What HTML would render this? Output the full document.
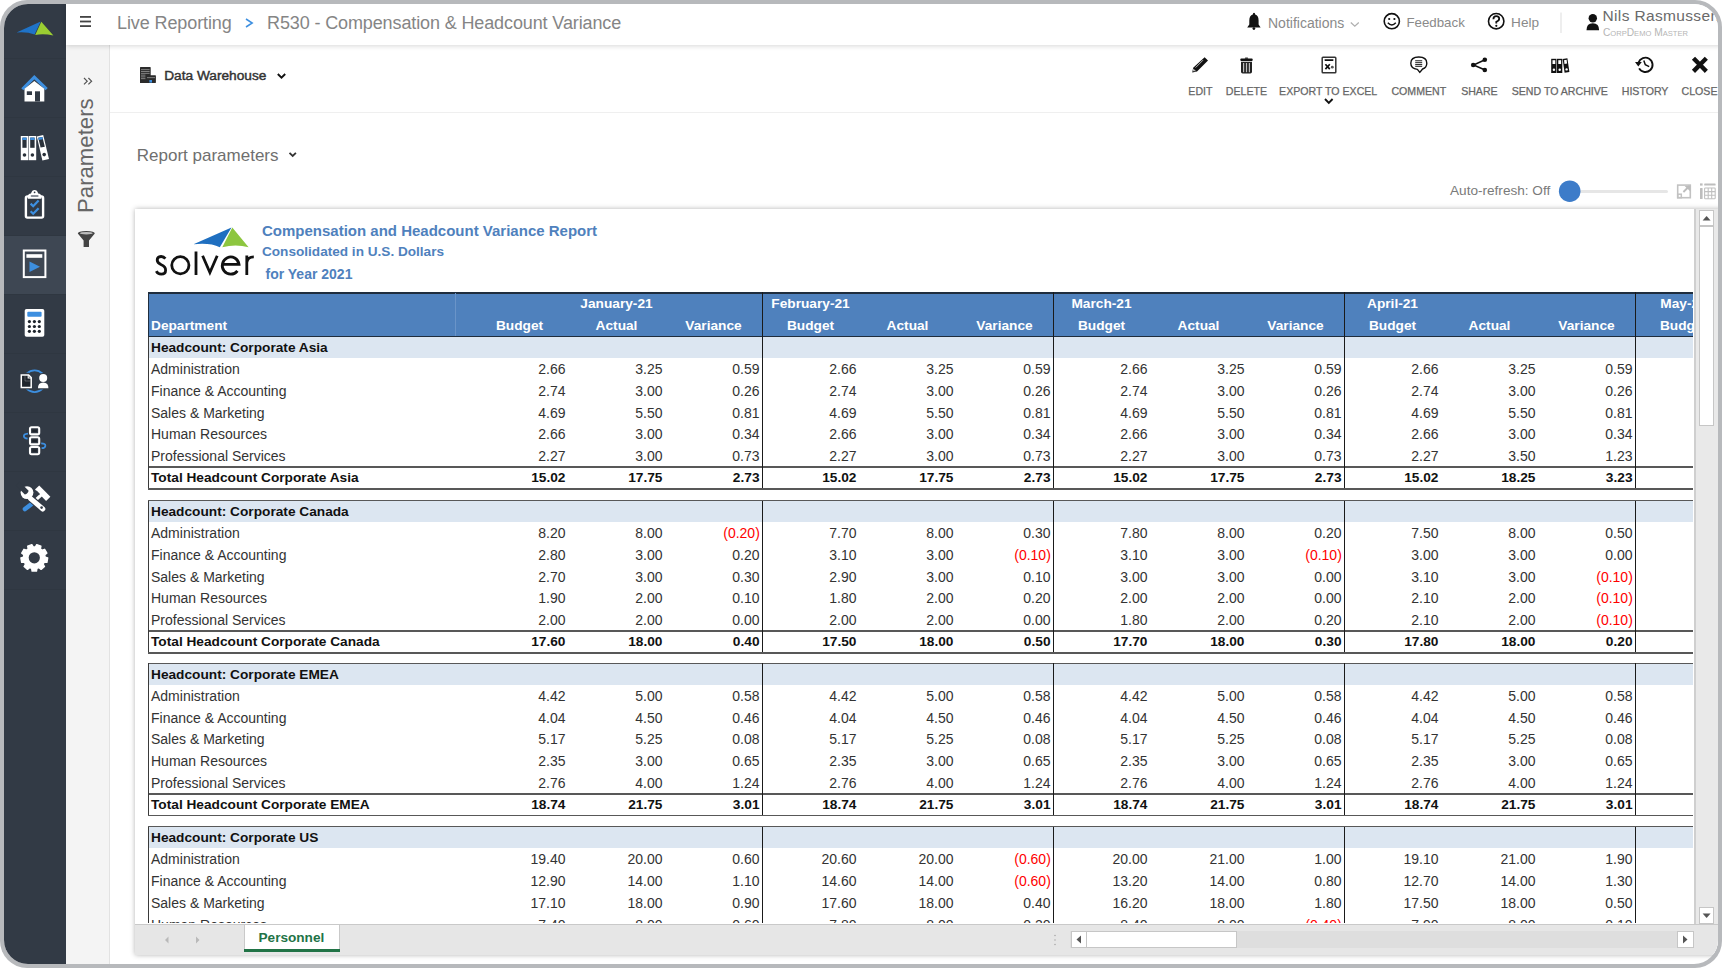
<!DOCTYPE html>
<html><head><meta charset="utf-8">
<style>
html,body{margin:0;padding:0;background:#fff;width:1722px;height:968px;overflow:hidden;font-family:"Liberation Sans", sans-serif;}
.t{position:absolute;white-space:nowrap;line-height:1;}
.b{position:absolute;}
svg{position:absolute;overflow:visible;}
#frame{position:absolute;left:0;top:0;width:1722px;height:968px;background:#b7b9bc;border-radius:27px;}
#app{position:absolute;left:0;top:0;width:1722px;height:968px;background:#fff;clip-path:inset(4px 4px 4px 4px round 24px);overflow:hidden;}
</style></head><body>
<div id="frame"></div>
<div id="app">

<div class="b" style="left:66px;top:44px;width:44px;height:924px;background:#f4f4f4;border-right:1px solid #e2e2e2;box-sizing:border-box;"></div>
<div class="b" style="left:110px;top:112px;width:1612px;height:1px;background:#efefef;"></div>
<div class="b" style="left:0px;top:0px;width:66px;height:968px;background:#323a45;"></div>
<div class="b" style="left:4px;top:236px;width:62px;height:58px;background:#3e4753;"></div>
<div class="b" style="left:4px;top:58px;width:62px;height:1px;background:#2f3741;"></div>
<div class="b" style="left:4px;top:117px;width:62px;height:1px;background:#2f3741;"></div>
<div class="b" style="left:4px;top:176px;width:62px;height:1px;background:#2f3741;"></div>
<div class="b" style="left:4px;top:235px;width:62px;height:1px;background:#2f3741;"></div>
<div class="b" style="left:4px;top:294px;width:62px;height:1px;background:#2f3741;"></div>
<div class="b" style="left:4px;top:353px;width:62px;height:1px;background:#2f3741;"></div>
<div class="b" style="left:4px;top:412px;width:62px;height:1px;background:#2f3741;"></div>
<div class="b" style="left:4px;top:471px;width:62px;height:1px;background:#2f3741;"></div>
<div class="b" style="left:4px;top:530px;width:62px;height:1px;background:#2f3741;"></div>
<div class="b" style="left:4px;top:589px;width:62px;height:1px;background:#2f3741;"></div>
<div class="b" style="left:66px;top:0px;width:1656px;height:44.5px;background:#fff;box-shadow:0 1px 5px rgba(0,0,0,0.16);"></div>
<div class="b" style="left:135px;top:209px;width:1600px;height:746px;background:#fff;box-shadow:0 0 5px rgba(0,0,0,0.3);"></div>
<div class="b" style="left:148px;top:292px;width:1545px;height:631px;overflow:hidden;">
<div class="b" style="left:0.00px;top:0.00px;width:1600.00px;height:45.00px;background:#4f81bd;"></div>
<div class="b" style="left:0.00px;top:0.00px;width:1600.00px;height:1.50px;background:#1f2d3d;"></div>
<div class="b" style="left:0.00px;top:44.00px;width:1600.00px;height:1.20px;background:#1f2d3d;"></div>
<div class="b" style="left:306.50px;top:1.00px;width:1.00px;height:43.00px;background:#6a94c8;"></div>
<div class="t" style="left:368.50px;width:200px;text-align:center;top:4.70px;font-size:13.7px;color:#fff;font-weight:bold;">January-21</div>
<div class="t" style="left:562.50px;width:200px;text-align:center;top:4.70px;font-size:13.7px;color:#fff;font-weight:bold;">February-21</div>
<div class="t" style="left:853.50px;width:200px;text-align:center;top:4.70px;font-size:13.7px;color:#fff;font-weight:bold;">March-21</div>
<div class="t" style="left:1144.50px;width:200px;text-align:center;top:4.70px;font-size:13.7px;color:#fff;font-weight:bold;">April-21</div>
<div class="t" style="left:1435.50px;width:200px;text-align:center;top:4.70px;font-size:13.7px;color:#fff;font-weight:bold;">May-21</div>
<div class="t" style="left:3.00px;top:27.10px;font-size:13.7px;color:#fff;font-weight:bold;">Department</div>
<div class="t" style="left:271.50px;width:200px;text-align:center;top:27.10px;font-size:13.7px;color:#fff;font-weight:bold;">Budget</div>
<div class="t" style="left:368.50px;width:200px;text-align:center;top:27.10px;font-size:13.7px;color:#fff;font-weight:bold;">Actual</div>
<div class="t" style="left:465.50px;width:200px;text-align:center;top:27.10px;font-size:13.7px;color:#fff;font-weight:bold;">Variance</div>
<div class="t" style="left:562.50px;width:200px;text-align:center;top:27.10px;font-size:13.7px;color:#fff;font-weight:bold;">Budget</div>
<div class="t" style="left:659.50px;width:200px;text-align:center;top:27.10px;font-size:13.7px;color:#fff;font-weight:bold;">Actual</div>
<div class="t" style="left:756.50px;width:200px;text-align:center;top:27.10px;font-size:13.7px;color:#fff;font-weight:bold;">Variance</div>
<div class="t" style="left:853.50px;width:200px;text-align:center;top:27.10px;font-size:13.7px;color:#fff;font-weight:bold;">Budget</div>
<div class="t" style="left:950.50px;width:200px;text-align:center;top:27.10px;font-size:13.7px;color:#fff;font-weight:bold;">Actual</div>
<div class="t" style="left:1047.50px;width:200px;text-align:center;top:27.10px;font-size:13.7px;color:#fff;font-weight:bold;">Variance</div>
<div class="t" style="left:1144.50px;width:200px;text-align:center;top:27.10px;font-size:13.7px;color:#fff;font-weight:bold;">Budget</div>
<div class="t" style="left:1241.50px;width:200px;text-align:center;top:27.10px;font-size:13.7px;color:#fff;font-weight:bold;">Actual</div>
<div class="t" style="left:1338.50px;width:200px;text-align:center;top:27.10px;font-size:13.7px;color:#fff;font-weight:bold;">Variance</div>
<div class="t" style="left:1435.50px;width:200px;text-align:center;top:27.10px;font-size:13.7px;color:#fff;font-weight:bold;">Budget</div>
<div class="t" style="left:1532.50px;width:200px;text-align:center;top:27.10px;font-size:13.7px;color:#fff;font-weight:bold;">Actual</div>
<div class="t" style="left:1629.50px;width:200px;text-align:center;top:27.10px;font-size:13.7px;color:#fff;font-weight:bold;">Variance</div>
<div class="b" style="left:0.00px;top:45.20px;width:1600.00px;height:21.10px;background:#dce6f1;"></div>
<div class="t" style="left:3.00px;top:48.70px;font-size:13.7px;color:#111;font-weight:bold;">Headcount: Corporate Asia</div>
<div class="t" style="left:3.00px;top:70.25px;font-size:14px;color:#333;">Administration</div>
<div class="t" style="left:297.50px;width:120px;text-align:right;top:70.25px;font-size:14px;color:#333;">2.66</div>
<div class="t" style="left:394.50px;width:120px;text-align:right;top:70.25px;font-size:14px;color:#333;">3.25</div>
<div class="t" style="left:491.50px;width:120px;text-align:right;top:70.25px;font-size:14px;color:#333;">0.59</div>
<div class="t" style="left:588.50px;width:120px;text-align:right;top:70.25px;font-size:14px;color:#333;">2.66</div>
<div class="t" style="left:685.50px;width:120px;text-align:right;top:70.25px;font-size:14px;color:#333;">3.25</div>
<div class="t" style="left:782.50px;width:120px;text-align:right;top:70.25px;font-size:14px;color:#333;">0.59</div>
<div class="t" style="left:879.50px;width:120px;text-align:right;top:70.25px;font-size:14px;color:#333;">2.66</div>
<div class="t" style="left:976.50px;width:120px;text-align:right;top:70.25px;font-size:14px;color:#333;">3.25</div>
<div class="t" style="left:1073.50px;width:120px;text-align:right;top:70.25px;font-size:14px;color:#333;">0.59</div>
<div class="t" style="left:1170.50px;width:120px;text-align:right;top:70.25px;font-size:14px;color:#333;">2.66</div>
<div class="t" style="left:1267.50px;width:120px;text-align:right;top:70.25px;font-size:14px;color:#333;">3.25</div>
<div class="t" style="left:1364.50px;width:120px;text-align:right;top:70.25px;font-size:14px;color:#333;">0.59</div>
<div class="t" style="left:3.00px;top:91.95px;font-size:14px;color:#333;">Finance &amp; Accounting</div>
<div class="t" style="left:297.50px;width:120px;text-align:right;top:91.95px;font-size:14px;color:#333;">2.74</div>
<div class="t" style="left:394.50px;width:120px;text-align:right;top:91.95px;font-size:14px;color:#333;">3.00</div>
<div class="t" style="left:491.50px;width:120px;text-align:right;top:91.95px;font-size:14px;color:#333;">0.26</div>
<div class="t" style="left:588.50px;width:120px;text-align:right;top:91.95px;font-size:14px;color:#333;">2.74</div>
<div class="t" style="left:685.50px;width:120px;text-align:right;top:91.95px;font-size:14px;color:#333;">3.00</div>
<div class="t" style="left:782.50px;width:120px;text-align:right;top:91.95px;font-size:14px;color:#333;">0.26</div>
<div class="t" style="left:879.50px;width:120px;text-align:right;top:91.95px;font-size:14px;color:#333;">2.74</div>
<div class="t" style="left:976.50px;width:120px;text-align:right;top:91.95px;font-size:14px;color:#333;">3.00</div>
<div class="t" style="left:1073.50px;width:120px;text-align:right;top:91.95px;font-size:14px;color:#333;">0.26</div>
<div class="t" style="left:1170.50px;width:120px;text-align:right;top:91.95px;font-size:14px;color:#333;">2.74</div>
<div class="t" style="left:1267.50px;width:120px;text-align:right;top:91.95px;font-size:14px;color:#333;">3.00</div>
<div class="t" style="left:1364.50px;width:120px;text-align:right;top:91.95px;font-size:14px;color:#333;">0.26</div>
<div class="t" style="left:3.00px;top:113.65px;font-size:14px;color:#333;">Sales &amp; Marketing</div>
<div class="t" style="left:297.50px;width:120px;text-align:right;top:113.65px;font-size:14px;color:#333;">4.69</div>
<div class="t" style="left:394.50px;width:120px;text-align:right;top:113.65px;font-size:14px;color:#333;">5.50</div>
<div class="t" style="left:491.50px;width:120px;text-align:right;top:113.65px;font-size:14px;color:#333;">0.81</div>
<div class="t" style="left:588.50px;width:120px;text-align:right;top:113.65px;font-size:14px;color:#333;">4.69</div>
<div class="t" style="left:685.50px;width:120px;text-align:right;top:113.65px;font-size:14px;color:#333;">5.50</div>
<div class="t" style="left:782.50px;width:120px;text-align:right;top:113.65px;font-size:14px;color:#333;">0.81</div>
<div class="t" style="left:879.50px;width:120px;text-align:right;top:113.65px;font-size:14px;color:#333;">4.69</div>
<div class="t" style="left:976.50px;width:120px;text-align:right;top:113.65px;font-size:14px;color:#333;">5.50</div>
<div class="t" style="left:1073.50px;width:120px;text-align:right;top:113.65px;font-size:14px;color:#333;">0.81</div>
<div class="t" style="left:1170.50px;width:120px;text-align:right;top:113.65px;font-size:14px;color:#333;">4.69</div>
<div class="t" style="left:1267.50px;width:120px;text-align:right;top:113.65px;font-size:14px;color:#333;">5.50</div>
<div class="t" style="left:1364.50px;width:120px;text-align:right;top:113.65px;font-size:14px;color:#333;">0.81</div>
<div class="t" style="left:3.00px;top:135.35px;font-size:14px;color:#333;">Human Resources</div>
<div class="t" style="left:297.50px;width:120px;text-align:right;top:135.35px;font-size:14px;color:#333;">2.66</div>
<div class="t" style="left:394.50px;width:120px;text-align:right;top:135.35px;font-size:14px;color:#333;">3.00</div>
<div class="t" style="left:491.50px;width:120px;text-align:right;top:135.35px;font-size:14px;color:#333;">0.34</div>
<div class="t" style="left:588.50px;width:120px;text-align:right;top:135.35px;font-size:14px;color:#333;">2.66</div>
<div class="t" style="left:685.50px;width:120px;text-align:right;top:135.35px;font-size:14px;color:#333;">3.00</div>
<div class="t" style="left:782.50px;width:120px;text-align:right;top:135.35px;font-size:14px;color:#333;">0.34</div>
<div class="t" style="left:879.50px;width:120px;text-align:right;top:135.35px;font-size:14px;color:#333;">2.66</div>
<div class="t" style="left:976.50px;width:120px;text-align:right;top:135.35px;font-size:14px;color:#333;">3.00</div>
<div class="t" style="left:1073.50px;width:120px;text-align:right;top:135.35px;font-size:14px;color:#333;">0.34</div>
<div class="t" style="left:1170.50px;width:120px;text-align:right;top:135.35px;font-size:14px;color:#333;">2.66</div>
<div class="t" style="left:1267.50px;width:120px;text-align:right;top:135.35px;font-size:14px;color:#333;">3.00</div>
<div class="t" style="left:1364.50px;width:120px;text-align:right;top:135.35px;font-size:14px;color:#333;">0.34</div>
<div class="t" style="left:3.00px;top:157.05px;font-size:14px;color:#333;">Professional Services</div>
<div class="t" style="left:297.50px;width:120px;text-align:right;top:157.05px;font-size:14px;color:#333;">2.27</div>
<div class="t" style="left:394.50px;width:120px;text-align:right;top:157.05px;font-size:14px;color:#333;">3.00</div>
<div class="t" style="left:491.50px;width:120px;text-align:right;top:157.05px;font-size:14px;color:#333;">0.73</div>
<div class="t" style="left:588.50px;width:120px;text-align:right;top:157.05px;font-size:14px;color:#333;">2.27</div>
<div class="t" style="left:685.50px;width:120px;text-align:right;top:157.05px;font-size:14px;color:#333;">3.00</div>
<div class="t" style="left:782.50px;width:120px;text-align:right;top:157.05px;font-size:14px;color:#333;">0.73</div>
<div class="t" style="left:879.50px;width:120px;text-align:right;top:157.05px;font-size:14px;color:#333;">2.27</div>
<div class="t" style="left:976.50px;width:120px;text-align:right;top:157.05px;font-size:14px;color:#333;">3.00</div>
<div class="t" style="left:1073.50px;width:120px;text-align:right;top:157.05px;font-size:14px;color:#333;">0.73</div>
<div class="t" style="left:1170.50px;width:120px;text-align:right;top:157.05px;font-size:14px;color:#333;">2.27</div>
<div class="t" style="left:1267.50px;width:120px;text-align:right;top:157.05px;font-size:14px;color:#333;">3.50</div>
<div class="t" style="left:1364.50px;width:120px;text-align:right;top:157.05px;font-size:14px;color:#333;">1.23</div>
<div class="b" style="left:0.00px;top:174.40px;width:1600.00px;height:1.60px;background:#585858;"></div>
<div class="b" style="left:0.00px;top:196.10px;width:1600.00px;height:1.60px;background:#585858;"></div>
<div class="t" style="left:3.00px;top:179.20px;font-size:13.7px;color:#111;font-weight:bold;">Total Headcount Corporate Asia</div>
<div class="t" style="left:297.50px;width:120px;text-align:right;top:179.20px;font-size:13.7px;color:#111;font-weight:bold;">15.02</div>
<div class="t" style="left:394.50px;width:120px;text-align:right;top:179.20px;font-size:13.7px;color:#111;font-weight:bold;">17.75</div>
<div class="t" style="left:491.50px;width:120px;text-align:right;top:179.20px;font-size:13.7px;color:#111;font-weight:bold;">2.73</div>
<div class="t" style="left:588.50px;width:120px;text-align:right;top:179.20px;font-size:13.7px;color:#111;font-weight:bold;">15.02</div>
<div class="t" style="left:685.50px;width:120px;text-align:right;top:179.20px;font-size:13.7px;color:#111;font-weight:bold;">17.75</div>
<div class="t" style="left:782.50px;width:120px;text-align:right;top:179.20px;font-size:13.7px;color:#111;font-weight:bold;">2.73</div>
<div class="t" style="left:879.50px;width:120px;text-align:right;top:179.20px;font-size:13.7px;color:#111;font-weight:bold;">15.02</div>
<div class="t" style="left:976.50px;width:120px;text-align:right;top:179.20px;font-size:13.7px;color:#111;font-weight:bold;">17.75</div>
<div class="t" style="left:1073.50px;width:120px;text-align:right;top:179.20px;font-size:13.7px;color:#111;font-weight:bold;">2.73</div>
<div class="t" style="left:1170.50px;width:120px;text-align:right;top:179.20px;font-size:13.7px;color:#111;font-weight:bold;">15.02</div>
<div class="t" style="left:1267.50px;width:120px;text-align:right;top:179.20px;font-size:13.7px;color:#111;font-weight:bold;">18.25</div>
<div class="t" style="left:1364.50px;width:120px;text-align:right;top:179.20px;font-size:13.7px;color:#111;font-weight:bold;">3.23</div>
<div class="b" style="left:-0.20px;top:44.60px;width:1.50px;height:151.90px;background:#3a3a3a;"></div>
<div class="b" style="left:613.50px;top:44.60px;width:1.10px;height:151.90px;background:#1a1a1a;"></div>
<div class="b" style="left:904.50px;top:44.60px;width:1.10px;height:151.90px;background:#1a1a1a;"></div>
<div class="b" style="left:1195.50px;top:44.60px;width:1.10px;height:151.90px;background:#1a1a1a;"></div>
<div class="b" style="left:1486.50px;top:44.60px;width:1.10px;height:151.90px;background:#1a1a1a;"></div>
<div class="b" style="left:0.00px;top:207.80px;width:1600.00px;height:1.60px;background:#585858;"></div>
<div class="b" style="left:0.00px;top:209.10px;width:1600.00px;height:21.10px;background:#dce6f1;"></div>
<div class="t" style="left:3.00px;top:212.60px;font-size:13.7px;color:#111;font-weight:bold;">Headcount: Corporate Canada</div>
<div class="t" style="left:3.00px;top:234.15px;font-size:14px;color:#333;">Administration</div>
<div class="t" style="left:297.50px;width:120px;text-align:right;top:234.15px;font-size:14px;color:#333;">8.20</div>
<div class="t" style="left:394.50px;width:120px;text-align:right;top:234.15px;font-size:14px;color:#333;">8.00</div>
<div class="t" style="left:491.80px;width:120px;text-align:right;top:234.15px;font-size:14px;color:#ff0000;">(0.20)</div>
<div class="t" style="left:588.50px;width:120px;text-align:right;top:234.15px;font-size:14px;color:#333;">7.70</div>
<div class="t" style="left:685.50px;width:120px;text-align:right;top:234.15px;font-size:14px;color:#333;">8.00</div>
<div class="t" style="left:782.50px;width:120px;text-align:right;top:234.15px;font-size:14px;color:#333;">0.30</div>
<div class="t" style="left:879.50px;width:120px;text-align:right;top:234.15px;font-size:14px;color:#333;">7.80</div>
<div class="t" style="left:976.50px;width:120px;text-align:right;top:234.15px;font-size:14px;color:#333;">8.00</div>
<div class="t" style="left:1073.50px;width:120px;text-align:right;top:234.15px;font-size:14px;color:#333;">0.20</div>
<div class="t" style="left:1170.50px;width:120px;text-align:right;top:234.15px;font-size:14px;color:#333;">7.50</div>
<div class="t" style="left:1267.50px;width:120px;text-align:right;top:234.15px;font-size:14px;color:#333;">8.00</div>
<div class="t" style="left:1364.50px;width:120px;text-align:right;top:234.15px;font-size:14px;color:#333;">0.50</div>
<div class="t" style="left:3.00px;top:255.85px;font-size:14px;color:#333;">Finance &amp; Accounting</div>
<div class="t" style="left:297.50px;width:120px;text-align:right;top:255.85px;font-size:14px;color:#333;">2.80</div>
<div class="t" style="left:394.50px;width:120px;text-align:right;top:255.85px;font-size:14px;color:#333;">3.00</div>
<div class="t" style="left:491.50px;width:120px;text-align:right;top:255.85px;font-size:14px;color:#333;">0.20</div>
<div class="t" style="left:588.50px;width:120px;text-align:right;top:255.85px;font-size:14px;color:#333;">3.10</div>
<div class="t" style="left:685.50px;width:120px;text-align:right;top:255.85px;font-size:14px;color:#333;">3.00</div>
<div class="t" style="left:782.80px;width:120px;text-align:right;top:255.85px;font-size:14px;color:#ff0000;">(0.10)</div>
<div class="t" style="left:879.50px;width:120px;text-align:right;top:255.85px;font-size:14px;color:#333;">3.10</div>
<div class="t" style="left:976.50px;width:120px;text-align:right;top:255.85px;font-size:14px;color:#333;">3.00</div>
<div class="t" style="left:1073.80px;width:120px;text-align:right;top:255.85px;font-size:14px;color:#ff0000;">(0.10)</div>
<div class="t" style="left:1170.50px;width:120px;text-align:right;top:255.85px;font-size:14px;color:#333;">3.00</div>
<div class="t" style="left:1267.50px;width:120px;text-align:right;top:255.85px;font-size:14px;color:#333;">3.00</div>
<div class="t" style="left:1364.50px;width:120px;text-align:right;top:255.85px;font-size:14px;color:#333;">0.00</div>
<div class="t" style="left:3.00px;top:277.55px;font-size:14px;color:#333;">Sales &amp; Marketing</div>
<div class="t" style="left:297.50px;width:120px;text-align:right;top:277.55px;font-size:14px;color:#333;">2.70</div>
<div class="t" style="left:394.50px;width:120px;text-align:right;top:277.55px;font-size:14px;color:#333;">3.00</div>
<div class="t" style="left:491.50px;width:120px;text-align:right;top:277.55px;font-size:14px;color:#333;">0.30</div>
<div class="t" style="left:588.50px;width:120px;text-align:right;top:277.55px;font-size:14px;color:#333;">2.90</div>
<div class="t" style="left:685.50px;width:120px;text-align:right;top:277.55px;font-size:14px;color:#333;">3.00</div>
<div class="t" style="left:782.50px;width:120px;text-align:right;top:277.55px;font-size:14px;color:#333;">0.10</div>
<div class="t" style="left:879.50px;width:120px;text-align:right;top:277.55px;font-size:14px;color:#333;">3.00</div>
<div class="t" style="left:976.50px;width:120px;text-align:right;top:277.55px;font-size:14px;color:#333;">3.00</div>
<div class="t" style="left:1073.50px;width:120px;text-align:right;top:277.55px;font-size:14px;color:#333;">0.00</div>
<div class="t" style="left:1170.50px;width:120px;text-align:right;top:277.55px;font-size:14px;color:#333;">3.10</div>
<div class="t" style="left:1267.50px;width:120px;text-align:right;top:277.55px;font-size:14px;color:#333;">3.00</div>
<div class="t" style="left:1364.80px;width:120px;text-align:right;top:277.55px;font-size:14px;color:#ff0000;">(0.10)</div>
<div class="t" style="left:3.00px;top:299.25px;font-size:14px;color:#333;">Human Resources</div>
<div class="t" style="left:297.50px;width:120px;text-align:right;top:299.25px;font-size:14px;color:#333;">1.90</div>
<div class="t" style="left:394.50px;width:120px;text-align:right;top:299.25px;font-size:14px;color:#333;">2.00</div>
<div class="t" style="left:491.50px;width:120px;text-align:right;top:299.25px;font-size:14px;color:#333;">0.10</div>
<div class="t" style="left:588.50px;width:120px;text-align:right;top:299.25px;font-size:14px;color:#333;">1.80</div>
<div class="t" style="left:685.50px;width:120px;text-align:right;top:299.25px;font-size:14px;color:#333;">2.00</div>
<div class="t" style="left:782.50px;width:120px;text-align:right;top:299.25px;font-size:14px;color:#333;">0.20</div>
<div class="t" style="left:879.50px;width:120px;text-align:right;top:299.25px;font-size:14px;color:#333;">2.00</div>
<div class="t" style="left:976.50px;width:120px;text-align:right;top:299.25px;font-size:14px;color:#333;">2.00</div>
<div class="t" style="left:1073.50px;width:120px;text-align:right;top:299.25px;font-size:14px;color:#333;">0.00</div>
<div class="t" style="left:1170.50px;width:120px;text-align:right;top:299.25px;font-size:14px;color:#333;">2.10</div>
<div class="t" style="left:1267.50px;width:120px;text-align:right;top:299.25px;font-size:14px;color:#333;">2.00</div>
<div class="t" style="left:1364.80px;width:120px;text-align:right;top:299.25px;font-size:14px;color:#ff0000;">(0.10)</div>
<div class="t" style="left:3.00px;top:320.95px;font-size:14px;color:#333;">Professional Services</div>
<div class="t" style="left:297.50px;width:120px;text-align:right;top:320.95px;font-size:14px;color:#333;">2.00</div>
<div class="t" style="left:394.50px;width:120px;text-align:right;top:320.95px;font-size:14px;color:#333;">2.00</div>
<div class="t" style="left:491.50px;width:120px;text-align:right;top:320.95px;font-size:14px;color:#333;">0.00</div>
<div class="t" style="left:588.50px;width:120px;text-align:right;top:320.95px;font-size:14px;color:#333;">2.00</div>
<div class="t" style="left:685.50px;width:120px;text-align:right;top:320.95px;font-size:14px;color:#333;">2.00</div>
<div class="t" style="left:782.50px;width:120px;text-align:right;top:320.95px;font-size:14px;color:#333;">0.00</div>
<div class="t" style="left:879.50px;width:120px;text-align:right;top:320.95px;font-size:14px;color:#333;">1.80</div>
<div class="t" style="left:976.50px;width:120px;text-align:right;top:320.95px;font-size:14px;color:#333;">2.00</div>
<div class="t" style="left:1073.50px;width:120px;text-align:right;top:320.95px;font-size:14px;color:#333;">0.20</div>
<div class="t" style="left:1170.50px;width:120px;text-align:right;top:320.95px;font-size:14px;color:#333;">2.10</div>
<div class="t" style="left:1267.50px;width:120px;text-align:right;top:320.95px;font-size:14px;color:#333;">2.00</div>
<div class="t" style="left:1364.80px;width:120px;text-align:right;top:320.95px;font-size:14px;color:#ff0000;">(0.10)</div>
<div class="b" style="left:0.00px;top:338.30px;width:1600.00px;height:1.60px;background:#585858;"></div>
<div class="b" style="left:0.00px;top:360.00px;width:1600.00px;height:1.60px;background:#585858;"></div>
<div class="t" style="left:3.00px;top:343.10px;font-size:13.7px;color:#111;font-weight:bold;">Total Headcount Corporate Canada</div>
<div class="t" style="left:297.50px;width:120px;text-align:right;top:343.10px;font-size:13.7px;color:#111;font-weight:bold;">17.60</div>
<div class="t" style="left:394.50px;width:120px;text-align:right;top:343.10px;font-size:13.7px;color:#111;font-weight:bold;">18.00</div>
<div class="t" style="left:491.50px;width:120px;text-align:right;top:343.10px;font-size:13.7px;color:#111;font-weight:bold;">0.40</div>
<div class="t" style="left:588.50px;width:120px;text-align:right;top:343.10px;font-size:13.7px;color:#111;font-weight:bold;">17.50</div>
<div class="t" style="left:685.50px;width:120px;text-align:right;top:343.10px;font-size:13.7px;color:#111;font-weight:bold;">18.00</div>
<div class="t" style="left:782.50px;width:120px;text-align:right;top:343.10px;font-size:13.7px;color:#111;font-weight:bold;">0.50</div>
<div class="t" style="left:879.50px;width:120px;text-align:right;top:343.10px;font-size:13.7px;color:#111;font-weight:bold;">17.70</div>
<div class="t" style="left:976.50px;width:120px;text-align:right;top:343.10px;font-size:13.7px;color:#111;font-weight:bold;">18.00</div>
<div class="t" style="left:1073.50px;width:120px;text-align:right;top:343.10px;font-size:13.7px;color:#111;font-weight:bold;">0.30</div>
<div class="t" style="left:1170.50px;width:120px;text-align:right;top:343.10px;font-size:13.7px;color:#111;font-weight:bold;">17.80</div>
<div class="t" style="left:1267.50px;width:120px;text-align:right;top:343.10px;font-size:13.7px;color:#111;font-weight:bold;">18.00</div>
<div class="t" style="left:1364.50px;width:120px;text-align:right;top:343.10px;font-size:13.7px;color:#111;font-weight:bold;">0.20</div>
<div class="b" style="left:-0.20px;top:208.50px;width:1.50px;height:151.90px;background:#3a3a3a;"></div>
<div class="b" style="left:613.50px;top:208.50px;width:1.10px;height:151.90px;background:#1a1a1a;"></div>
<div class="b" style="left:904.50px;top:208.50px;width:1.10px;height:151.90px;background:#1a1a1a;"></div>
<div class="b" style="left:1195.50px;top:208.50px;width:1.10px;height:151.90px;background:#1a1a1a;"></div>
<div class="b" style="left:1486.50px;top:208.50px;width:1.10px;height:151.90px;background:#1a1a1a;"></div>
<div class="b" style="left:0.00px;top:370.70px;width:1600.00px;height:1.60px;background:#585858;"></div>
<div class="b" style="left:0.00px;top:372.00px;width:1600.00px;height:21.10px;background:#dce6f1;"></div>
<div class="t" style="left:3.00px;top:375.50px;font-size:13.7px;color:#111;font-weight:bold;">Headcount: Corporate EMEA</div>
<div class="t" style="left:3.00px;top:397.05px;font-size:14px;color:#333;">Administration</div>
<div class="t" style="left:297.50px;width:120px;text-align:right;top:397.05px;font-size:14px;color:#333;">4.42</div>
<div class="t" style="left:394.50px;width:120px;text-align:right;top:397.05px;font-size:14px;color:#333;">5.00</div>
<div class="t" style="left:491.50px;width:120px;text-align:right;top:397.05px;font-size:14px;color:#333;">0.58</div>
<div class="t" style="left:588.50px;width:120px;text-align:right;top:397.05px;font-size:14px;color:#333;">4.42</div>
<div class="t" style="left:685.50px;width:120px;text-align:right;top:397.05px;font-size:14px;color:#333;">5.00</div>
<div class="t" style="left:782.50px;width:120px;text-align:right;top:397.05px;font-size:14px;color:#333;">0.58</div>
<div class="t" style="left:879.50px;width:120px;text-align:right;top:397.05px;font-size:14px;color:#333;">4.42</div>
<div class="t" style="left:976.50px;width:120px;text-align:right;top:397.05px;font-size:14px;color:#333;">5.00</div>
<div class="t" style="left:1073.50px;width:120px;text-align:right;top:397.05px;font-size:14px;color:#333;">0.58</div>
<div class="t" style="left:1170.50px;width:120px;text-align:right;top:397.05px;font-size:14px;color:#333;">4.42</div>
<div class="t" style="left:1267.50px;width:120px;text-align:right;top:397.05px;font-size:14px;color:#333;">5.00</div>
<div class="t" style="left:1364.50px;width:120px;text-align:right;top:397.05px;font-size:14px;color:#333;">0.58</div>
<div class="t" style="left:3.00px;top:418.75px;font-size:14px;color:#333;">Finance &amp; Accounting</div>
<div class="t" style="left:297.50px;width:120px;text-align:right;top:418.75px;font-size:14px;color:#333;">4.04</div>
<div class="t" style="left:394.50px;width:120px;text-align:right;top:418.75px;font-size:14px;color:#333;">4.50</div>
<div class="t" style="left:491.50px;width:120px;text-align:right;top:418.75px;font-size:14px;color:#333;">0.46</div>
<div class="t" style="left:588.50px;width:120px;text-align:right;top:418.75px;font-size:14px;color:#333;">4.04</div>
<div class="t" style="left:685.50px;width:120px;text-align:right;top:418.75px;font-size:14px;color:#333;">4.50</div>
<div class="t" style="left:782.50px;width:120px;text-align:right;top:418.75px;font-size:14px;color:#333;">0.46</div>
<div class="t" style="left:879.50px;width:120px;text-align:right;top:418.75px;font-size:14px;color:#333;">4.04</div>
<div class="t" style="left:976.50px;width:120px;text-align:right;top:418.75px;font-size:14px;color:#333;">4.50</div>
<div class="t" style="left:1073.50px;width:120px;text-align:right;top:418.75px;font-size:14px;color:#333;">0.46</div>
<div class="t" style="left:1170.50px;width:120px;text-align:right;top:418.75px;font-size:14px;color:#333;">4.04</div>
<div class="t" style="left:1267.50px;width:120px;text-align:right;top:418.75px;font-size:14px;color:#333;">4.50</div>
<div class="t" style="left:1364.50px;width:120px;text-align:right;top:418.75px;font-size:14px;color:#333;">0.46</div>
<div class="t" style="left:3.00px;top:440.45px;font-size:14px;color:#333;">Sales &amp; Marketing</div>
<div class="t" style="left:297.50px;width:120px;text-align:right;top:440.45px;font-size:14px;color:#333;">5.17</div>
<div class="t" style="left:394.50px;width:120px;text-align:right;top:440.45px;font-size:14px;color:#333;">5.25</div>
<div class="t" style="left:491.50px;width:120px;text-align:right;top:440.45px;font-size:14px;color:#333;">0.08</div>
<div class="t" style="left:588.50px;width:120px;text-align:right;top:440.45px;font-size:14px;color:#333;">5.17</div>
<div class="t" style="left:685.50px;width:120px;text-align:right;top:440.45px;font-size:14px;color:#333;">5.25</div>
<div class="t" style="left:782.50px;width:120px;text-align:right;top:440.45px;font-size:14px;color:#333;">0.08</div>
<div class="t" style="left:879.50px;width:120px;text-align:right;top:440.45px;font-size:14px;color:#333;">5.17</div>
<div class="t" style="left:976.50px;width:120px;text-align:right;top:440.45px;font-size:14px;color:#333;">5.25</div>
<div class="t" style="left:1073.50px;width:120px;text-align:right;top:440.45px;font-size:14px;color:#333;">0.08</div>
<div class="t" style="left:1170.50px;width:120px;text-align:right;top:440.45px;font-size:14px;color:#333;">5.17</div>
<div class="t" style="left:1267.50px;width:120px;text-align:right;top:440.45px;font-size:14px;color:#333;">5.25</div>
<div class="t" style="left:1364.50px;width:120px;text-align:right;top:440.45px;font-size:14px;color:#333;">0.08</div>
<div class="t" style="left:3.00px;top:462.15px;font-size:14px;color:#333;">Human Resources</div>
<div class="t" style="left:297.50px;width:120px;text-align:right;top:462.15px;font-size:14px;color:#333;">2.35</div>
<div class="t" style="left:394.50px;width:120px;text-align:right;top:462.15px;font-size:14px;color:#333;">3.00</div>
<div class="t" style="left:491.50px;width:120px;text-align:right;top:462.15px;font-size:14px;color:#333;">0.65</div>
<div class="t" style="left:588.50px;width:120px;text-align:right;top:462.15px;font-size:14px;color:#333;">2.35</div>
<div class="t" style="left:685.50px;width:120px;text-align:right;top:462.15px;font-size:14px;color:#333;">3.00</div>
<div class="t" style="left:782.50px;width:120px;text-align:right;top:462.15px;font-size:14px;color:#333;">0.65</div>
<div class="t" style="left:879.50px;width:120px;text-align:right;top:462.15px;font-size:14px;color:#333;">2.35</div>
<div class="t" style="left:976.50px;width:120px;text-align:right;top:462.15px;font-size:14px;color:#333;">3.00</div>
<div class="t" style="left:1073.50px;width:120px;text-align:right;top:462.15px;font-size:14px;color:#333;">0.65</div>
<div class="t" style="left:1170.50px;width:120px;text-align:right;top:462.15px;font-size:14px;color:#333;">2.35</div>
<div class="t" style="left:1267.50px;width:120px;text-align:right;top:462.15px;font-size:14px;color:#333;">3.00</div>
<div class="t" style="left:1364.50px;width:120px;text-align:right;top:462.15px;font-size:14px;color:#333;">0.65</div>
<div class="t" style="left:3.00px;top:483.85px;font-size:14px;color:#333;">Professional Services</div>
<div class="t" style="left:297.50px;width:120px;text-align:right;top:483.85px;font-size:14px;color:#333;">2.76</div>
<div class="t" style="left:394.50px;width:120px;text-align:right;top:483.85px;font-size:14px;color:#333;">4.00</div>
<div class="t" style="left:491.50px;width:120px;text-align:right;top:483.85px;font-size:14px;color:#333;">1.24</div>
<div class="t" style="left:588.50px;width:120px;text-align:right;top:483.85px;font-size:14px;color:#333;">2.76</div>
<div class="t" style="left:685.50px;width:120px;text-align:right;top:483.85px;font-size:14px;color:#333;">4.00</div>
<div class="t" style="left:782.50px;width:120px;text-align:right;top:483.85px;font-size:14px;color:#333;">1.24</div>
<div class="t" style="left:879.50px;width:120px;text-align:right;top:483.85px;font-size:14px;color:#333;">2.76</div>
<div class="t" style="left:976.50px;width:120px;text-align:right;top:483.85px;font-size:14px;color:#333;">4.00</div>
<div class="t" style="left:1073.50px;width:120px;text-align:right;top:483.85px;font-size:14px;color:#333;">1.24</div>
<div class="t" style="left:1170.50px;width:120px;text-align:right;top:483.85px;font-size:14px;color:#333;">2.76</div>
<div class="t" style="left:1267.50px;width:120px;text-align:right;top:483.85px;font-size:14px;color:#333;">4.00</div>
<div class="t" style="left:1364.50px;width:120px;text-align:right;top:483.85px;font-size:14px;color:#333;">1.24</div>
<div class="b" style="left:0.00px;top:501.20px;width:1600.00px;height:1.60px;background:#585858;"></div>
<div class="b" style="left:0.00px;top:522.90px;width:1600.00px;height:1.60px;background:#585858;"></div>
<div class="t" style="left:3.00px;top:506.00px;font-size:13.7px;color:#111;font-weight:bold;">Total Headcount Corporate EMEA</div>
<div class="t" style="left:297.50px;width:120px;text-align:right;top:506.00px;font-size:13.7px;color:#111;font-weight:bold;">18.74</div>
<div class="t" style="left:394.50px;width:120px;text-align:right;top:506.00px;font-size:13.7px;color:#111;font-weight:bold;">21.75</div>
<div class="t" style="left:491.50px;width:120px;text-align:right;top:506.00px;font-size:13.7px;color:#111;font-weight:bold;">3.01</div>
<div class="t" style="left:588.50px;width:120px;text-align:right;top:506.00px;font-size:13.7px;color:#111;font-weight:bold;">18.74</div>
<div class="t" style="left:685.50px;width:120px;text-align:right;top:506.00px;font-size:13.7px;color:#111;font-weight:bold;">21.75</div>
<div class="t" style="left:782.50px;width:120px;text-align:right;top:506.00px;font-size:13.7px;color:#111;font-weight:bold;">3.01</div>
<div class="t" style="left:879.50px;width:120px;text-align:right;top:506.00px;font-size:13.7px;color:#111;font-weight:bold;">18.74</div>
<div class="t" style="left:976.50px;width:120px;text-align:right;top:506.00px;font-size:13.7px;color:#111;font-weight:bold;">21.75</div>
<div class="t" style="left:1073.50px;width:120px;text-align:right;top:506.00px;font-size:13.7px;color:#111;font-weight:bold;">3.01</div>
<div class="t" style="left:1170.50px;width:120px;text-align:right;top:506.00px;font-size:13.7px;color:#111;font-weight:bold;">18.74</div>
<div class="t" style="left:1267.50px;width:120px;text-align:right;top:506.00px;font-size:13.7px;color:#111;font-weight:bold;">21.75</div>
<div class="t" style="left:1364.50px;width:120px;text-align:right;top:506.00px;font-size:13.7px;color:#111;font-weight:bold;">3.01</div>
<div class="b" style="left:-0.20px;top:371.40px;width:1.50px;height:151.90px;background:#3a3a3a;"></div>
<div class="b" style="left:613.50px;top:371.40px;width:1.10px;height:151.90px;background:#1a1a1a;"></div>
<div class="b" style="left:904.50px;top:371.40px;width:1.10px;height:151.90px;background:#1a1a1a;"></div>
<div class="b" style="left:1195.50px;top:371.40px;width:1.10px;height:151.90px;background:#1a1a1a;"></div>
<div class="b" style="left:1486.50px;top:371.40px;width:1.10px;height:151.90px;background:#1a1a1a;"></div>
<div class="b" style="left:0.00px;top:534.10px;width:1600.00px;height:1.60px;background:#585858;"></div>
<div class="b" style="left:0.00px;top:535.40px;width:1600.00px;height:21.10px;background:#dce6f1;"></div>
<div class="t" style="left:3.00px;top:538.90px;font-size:13.7px;color:#111;font-weight:bold;">Headcount: Corporate US</div>
<div class="t" style="left:3.00px;top:560.45px;font-size:14px;color:#333;">Administration</div>
<div class="t" style="left:297.50px;width:120px;text-align:right;top:560.45px;font-size:14px;color:#333;">19.40</div>
<div class="t" style="left:394.50px;width:120px;text-align:right;top:560.45px;font-size:14px;color:#333;">20.00</div>
<div class="t" style="left:491.50px;width:120px;text-align:right;top:560.45px;font-size:14px;color:#333;">0.60</div>
<div class="t" style="left:588.50px;width:120px;text-align:right;top:560.45px;font-size:14px;color:#333;">20.60</div>
<div class="t" style="left:685.50px;width:120px;text-align:right;top:560.45px;font-size:14px;color:#333;">20.00</div>
<div class="t" style="left:782.80px;width:120px;text-align:right;top:560.45px;font-size:14px;color:#ff0000;">(0.60)</div>
<div class="t" style="left:879.50px;width:120px;text-align:right;top:560.45px;font-size:14px;color:#333;">20.00</div>
<div class="t" style="left:976.50px;width:120px;text-align:right;top:560.45px;font-size:14px;color:#333;">21.00</div>
<div class="t" style="left:1073.50px;width:120px;text-align:right;top:560.45px;font-size:14px;color:#333;">1.00</div>
<div class="t" style="left:1170.50px;width:120px;text-align:right;top:560.45px;font-size:14px;color:#333;">19.10</div>
<div class="t" style="left:1267.50px;width:120px;text-align:right;top:560.45px;font-size:14px;color:#333;">21.00</div>
<div class="t" style="left:1364.50px;width:120px;text-align:right;top:560.45px;font-size:14px;color:#333;">1.90</div>
<div class="t" style="left:3.00px;top:582.15px;font-size:14px;color:#333;">Finance &amp; Accounting</div>
<div class="t" style="left:297.50px;width:120px;text-align:right;top:582.15px;font-size:14px;color:#333;">12.90</div>
<div class="t" style="left:394.50px;width:120px;text-align:right;top:582.15px;font-size:14px;color:#333;">14.00</div>
<div class="t" style="left:491.50px;width:120px;text-align:right;top:582.15px;font-size:14px;color:#333;">1.10</div>
<div class="t" style="left:588.50px;width:120px;text-align:right;top:582.15px;font-size:14px;color:#333;">14.60</div>
<div class="t" style="left:685.50px;width:120px;text-align:right;top:582.15px;font-size:14px;color:#333;">14.00</div>
<div class="t" style="left:782.80px;width:120px;text-align:right;top:582.15px;font-size:14px;color:#ff0000;">(0.60)</div>
<div class="t" style="left:879.50px;width:120px;text-align:right;top:582.15px;font-size:14px;color:#333;">13.20</div>
<div class="t" style="left:976.50px;width:120px;text-align:right;top:582.15px;font-size:14px;color:#333;">14.00</div>
<div class="t" style="left:1073.50px;width:120px;text-align:right;top:582.15px;font-size:14px;color:#333;">0.80</div>
<div class="t" style="left:1170.50px;width:120px;text-align:right;top:582.15px;font-size:14px;color:#333;">12.70</div>
<div class="t" style="left:1267.50px;width:120px;text-align:right;top:582.15px;font-size:14px;color:#333;">14.00</div>
<div class="t" style="left:1364.50px;width:120px;text-align:right;top:582.15px;font-size:14px;color:#333;">1.30</div>
<div class="t" style="left:3.00px;top:603.85px;font-size:14px;color:#333;">Sales &amp; Marketing</div>
<div class="t" style="left:297.50px;width:120px;text-align:right;top:603.85px;font-size:14px;color:#333;">17.10</div>
<div class="t" style="left:394.50px;width:120px;text-align:right;top:603.85px;font-size:14px;color:#333;">18.00</div>
<div class="t" style="left:491.50px;width:120px;text-align:right;top:603.85px;font-size:14px;color:#333;">0.90</div>
<div class="t" style="left:588.50px;width:120px;text-align:right;top:603.85px;font-size:14px;color:#333;">17.60</div>
<div class="t" style="left:685.50px;width:120px;text-align:right;top:603.85px;font-size:14px;color:#333;">18.00</div>
<div class="t" style="left:782.50px;width:120px;text-align:right;top:603.85px;font-size:14px;color:#333;">0.40</div>
<div class="t" style="left:879.50px;width:120px;text-align:right;top:603.85px;font-size:14px;color:#333;">16.20</div>
<div class="t" style="left:976.50px;width:120px;text-align:right;top:603.85px;font-size:14px;color:#333;">18.00</div>
<div class="t" style="left:1073.50px;width:120px;text-align:right;top:603.85px;font-size:14px;color:#333;">1.80</div>
<div class="t" style="left:1170.50px;width:120px;text-align:right;top:603.85px;font-size:14px;color:#333;">17.50</div>
<div class="t" style="left:1267.50px;width:120px;text-align:right;top:603.85px;font-size:14px;color:#333;">18.00</div>
<div class="t" style="left:1364.50px;width:120px;text-align:right;top:603.85px;font-size:14px;color:#333;">0.50</div>
<div class="t" style="left:3.00px;top:625.55px;font-size:14px;color:#333;">Human Resources</div>
<div class="t" style="left:297.50px;width:120px;text-align:right;top:625.55px;font-size:14px;color:#333;">7.40</div>
<div class="t" style="left:394.50px;width:120px;text-align:right;top:625.55px;font-size:14px;color:#333;">8.00</div>
<div class="t" style="left:491.50px;width:120px;text-align:right;top:625.55px;font-size:14px;color:#333;">0.60</div>
<div class="t" style="left:588.50px;width:120px;text-align:right;top:625.55px;font-size:14px;color:#333;">7.80</div>
<div class="t" style="left:685.50px;width:120px;text-align:right;top:625.55px;font-size:14px;color:#333;">8.00</div>
<div class="t" style="left:782.50px;width:120px;text-align:right;top:625.55px;font-size:14px;color:#333;">0.20</div>
<div class="t" style="left:879.50px;width:120px;text-align:right;top:625.55px;font-size:14px;color:#333;">8.40</div>
<div class="t" style="left:976.50px;width:120px;text-align:right;top:625.55px;font-size:14px;color:#333;">8.00</div>
<div class="t" style="left:1073.80px;width:120px;text-align:right;top:625.55px;font-size:14px;color:#ff0000;">(0.40)</div>
<div class="t" style="left:1170.50px;width:120px;text-align:right;top:625.55px;font-size:14px;color:#333;">7.90</div>
<div class="t" style="left:1267.50px;width:120px;text-align:right;top:625.55px;font-size:14px;color:#333;">8.00</div>
<div class="t" style="left:1364.50px;width:120px;text-align:right;top:625.55px;font-size:14px;color:#333;">0.10</div>
<div class="t" style="left:3.00px;top:647.25px;font-size:14px;color:#333;">Professional Services</div>
<div class="t" style="left:297.50px;width:120px;text-align:right;top:647.25px;font-size:14px;color:#333;">2.00</div>
<div class="t" style="left:394.50px;width:120px;text-align:right;top:647.25px;font-size:14px;color:#333;">2.00</div>
<div class="t" style="left:491.50px;width:120px;text-align:right;top:647.25px;font-size:14px;color:#333;">0.00</div>
<div class="t" style="left:588.50px;width:120px;text-align:right;top:647.25px;font-size:14px;color:#333;">2.00</div>
<div class="t" style="left:685.50px;width:120px;text-align:right;top:647.25px;font-size:14px;color:#333;">2.00</div>
<div class="t" style="left:782.50px;width:120px;text-align:right;top:647.25px;font-size:14px;color:#333;">0.00</div>
<div class="t" style="left:879.50px;width:120px;text-align:right;top:647.25px;font-size:14px;color:#333;">2.00</div>
<div class="t" style="left:976.50px;width:120px;text-align:right;top:647.25px;font-size:14px;color:#333;">2.00</div>
<div class="t" style="left:1073.50px;width:120px;text-align:right;top:647.25px;font-size:14px;color:#333;">0.00</div>
<div class="t" style="left:1170.50px;width:120px;text-align:right;top:647.25px;font-size:14px;color:#333;">2.00</div>
<div class="t" style="left:1267.50px;width:120px;text-align:right;top:647.25px;font-size:14px;color:#333;">2.00</div>
<div class="t" style="left:1364.50px;width:120px;text-align:right;top:647.25px;font-size:14px;color:#333;">0.00</div>
<div class="b" style="left:0.00px;top:664.60px;width:1600.00px;height:1.60px;background:#585858;"></div>
<div class="b" style="left:0.00px;top:686.30px;width:1600.00px;height:1.60px;background:#585858;"></div>
<div class="t" style="left:3.00px;top:669.40px;font-size:13.7px;color:#111;font-weight:bold;">Total Headcount Corporate US</div>
<div class="t" style="left:297.50px;width:120px;text-align:right;top:669.40px;font-size:13.7px;color:#111;font-weight:bold;">0</div>
<div class="t" style="left:394.50px;width:120px;text-align:right;top:669.40px;font-size:13.7px;color:#111;font-weight:bold;">0</div>
<div class="t" style="left:491.50px;width:120px;text-align:right;top:669.40px;font-size:13.7px;color:#111;font-weight:bold;">0</div>
<div class="t" style="left:588.50px;width:120px;text-align:right;top:669.40px;font-size:13.7px;color:#111;font-weight:bold;">0</div>
<div class="t" style="left:685.50px;width:120px;text-align:right;top:669.40px;font-size:13.7px;color:#111;font-weight:bold;">0</div>
<div class="t" style="left:782.50px;width:120px;text-align:right;top:669.40px;font-size:13.7px;color:#111;font-weight:bold;">0</div>
<div class="t" style="left:879.50px;width:120px;text-align:right;top:669.40px;font-size:13.7px;color:#111;font-weight:bold;">0</div>
<div class="t" style="left:976.50px;width:120px;text-align:right;top:669.40px;font-size:13.7px;color:#111;font-weight:bold;">0</div>
<div class="t" style="left:1073.50px;width:120px;text-align:right;top:669.40px;font-size:13.7px;color:#111;font-weight:bold;">0</div>
<div class="t" style="left:1170.50px;width:120px;text-align:right;top:669.40px;font-size:13.7px;color:#111;font-weight:bold;">0</div>
<div class="t" style="left:1267.50px;width:120px;text-align:right;top:669.40px;font-size:13.7px;color:#111;font-weight:bold;">0</div>
<div class="t" style="left:1364.50px;width:120px;text-align:right;top:669.40px;font-size:13.7px;color:#111;font-weight:bold;">0</div>
<div class="b" style="left:-0.20px;top:534.80px;width:1.50px;height:151.90px;background:#3a3a3a;"></div>
<div class="b" style="left:613.50px;top:534.80px;width:1.10px;height:151.90px;background:#1a1a1a;"></div>
<div class="b" style="left:904.50px;top:534.80px;width:1.10px;height:151.90px;background:#1a1a1a;"></div>
<div class="b" style="left:1195.50px;top:534.80px;width:1.10px;height:151.90px;background:#1a1a1a;"></div>
<div class="b" style="left:1486.50px;top:534.80px;width:1.10px;height:151.90px;background:#1a1a1a;"></div>
<div class="b" style="left:613.50px;top:0.00px;width:1.10px;height:45.00px;background:#1a1a1a;"></div>
<div class="b" style="left:904.50px;top:0.00px;width:1.10px;height:45.00px;background:#1a1a1a;"></div>
<div class="b" style="left:1195.50px;top:0.00px;width:1.10px;height:45.00px;background:#1a1a1a;"></div>
<div class="b" style="left:1486.50px;top:0.00px;width:1.10px;height:45.00px;background:#1a1a1a;"></div>
<div class="b" style="left:-0.20px;top:0.00px;width:1.50px;height:45.00px;background:#1f2d3d;"></div>
</div>
<svg style="left:0;top:0" width="1" height="1"></svg>
<svg style="left:190px;top:224px" width="62" height="26" viewBox="190 224 62 26">
<path d="M193.5 244.3 L231.5 227.4 L219.8 247.2 Q210 242.5 193.5 244.3 Z" fill="#1f6fc0"/>
<path d="M232.3 227.6 L248.6 247.3 Q236 243.8 222.3 247.2 Z" fill="#8dc63f"/>
</svg>
<svg style="left:0;top:0" width="1722" height="968"><g stroke="#111" stroke-width="2.8" fill="none">
<path d="M165.4 258.6 Q163.6 256.4 161 256.5 Q157.2 256.7 157.2 260.1 Q157.2 263 161.3 264.8 Q165.6 266.5 165.6 270.3 Q165.6 274.2 161.2 274.2 Q157.8 274.2 156.3 271.2"/>
<circle cx="180.35" cy="265.3" r="8.6"/>
<path d="M196 251.4 L196 275"/>
<path d="M202.6 255.8 L209.9 272.6 L217.2 255.8" stroke-linejoin="miter"/>
<path d="M222.4 264.3 L239 264.3 A8.4 8.6 0 1 0 237.4 270.8"/>
<path d="M246.8 255.5 L246.8 275 M246.8 262.5 Q247.6 256.8 253.8 256.8"/>
</g></svg>
<div class="t" style="left:262.00px;top:222.70px;font-size:15px;color:#4f81bd;font-weight:bold;">Compensation and Headcount Variance Report</div>
<div class="t" style="left:262.00px;top:244.79px;font-size:13.6px;color:#4f81bd;font-weight:bold;">Consolidated in U.S. Dollars</div>
<div class="t" style="left:265.50px;top:266.55px;font-size:14px;color:#4f81bd;font-weight:bold;">for Year 2021</div>
<div class="b" style="left:1694px;top:209px;width:2px;height:716px;background:#cfcfcf;"></div>
<div class="b" style="left:1696px;top:209px;width:24px;height:716px;background:#e9e9e9;"></div>
<div class="b" style="left:1699px;top:210px;width:15px;height:16px;background:#fff;border:1px solid #c6c6c6;box-sizing:border-box;"></div>
<div class="b" style="left:1699px;top:226px;width:15px;height:200px;background:#fff;border:1px solid #c6c6c6;box-sizing:border-box;"></div>
<div class="b" style="left:1699px;top:907px;width:15px;height:17px;background:#fff;border:1px solid #c6c6c6;box-sizing:border-box;"></div>
<svg style="left:0;top:0" width="1722" height="968">
<path d="M1702.6 220.5 L1706.6 216 L1710.6 220.5 Z" fill="#555"/>
<path d="M1702.6 913.5 L1706.6 918 L1710.6 913.5 Z" fill="#555"/>
</svg>
<div class="b" style="left:135px;top:924px;width:1600px;height:31px;background:#e6e6e6;border-top:1px solid #c9c9c9;box-sizing:border-box;"></div>
<div class="b" style="left:243.5px;top:925px;width:96px;height:27px;background:#fff;border-left:1px solid #c9c9c9;border-right:1px solid #c9c9c9;box-sizing:border-box;"></div>
<div class="b" style="left:243.5px;top:949px;width:96px;height:2.5px;background:#217346;"></div>
<div class="t" style="left:258.50px;top:930.79px;font-size:13.6px;color:#217346;font-weight:bold;">Personnel</div>
<svg style="left:0;top:0" width="1722" height="968">
<path d="M168.5 936.5 L165 940 L168.5 943.5 Z" fill="#b9b9b9"/>
<path d="M196 936.5 L199.5 940 L196 943.5 Z" fill="#b9b9b9"/>
<circle cx="1055" cy="935.5" r="0.8" fill="#aaa"/><circle cx="1055" cy="940" r="0.8" fill="#aaa"/><circle cx="1055" cy="944.5" r="0.8" fill="#aaa"/>
</svg>
<div class="b" style="left:1070px;top:931px;width:624px;height:17px;background:#dedede;"></div>
<div class="b" style="left:1071px;top:931px;width:16px;height:17px;background:#fff;border:1px solid #c6c6c6;box-sizing:border-box;"></div>
<div class="b" style="left:1086px;top:931px;width:151px;height:17px;background:#fff;border:1px solid #c6c6c6;box-sizing:border-box;"></div>
<div class="b" style="left:1677px;top:931px;width:17px;height:17px;background:#fff;border:1px solid #c6c6c6;box-sizing:border-box;"></div>
<svg style="left:0;top:0" width="1722" height="968">
<path d="M1081 935.5 L1076.5 939.5 L1081 943.5 Z" fill="#555"/>
<path d="M1683 935.5 L1687.5 939.5 L1683 943.5 Z" fill="#555"/>
</svg>
<div class="t" style="left:136.80px;top:146.61px;font-size:17px;color:#6f6f6f;">Report parameters</div>
<svg style="left:0;top:0" width="1722" height="968">
<path d="M289.5 152.8 L292.7 156 L295.9 152.8" stroke="#333" stroke-width="1.8" fill="none"/>
</svg>
<div class="t" style="left:1450.00px;top:184.39px;font-size:13.6px;color:#7a7a7a;">Auto-refresh: Off</div>
<div class="b" style="left:1578px;top:189.5px;width:90px;height:3.5px;background:#e6e6e6;border-radius:2px;"></div>
<svg style="left:0;top:0" width="1722" height="968">
<circle cx="1569.7" cy="191.2" r="10.8" fill="#3d7cc9"/>
<rect x="1677.7" y="185.1" width="12.6" height="12.6" fill="none" stroke="#c2c2c2" stroke-width="1.6"/>
<rect x="1677.7" y="194.2" width="3.6" height="3.5" fill="none" stroke="#c2c2c2" stroke-width="1.5"/>
<path d="M1683.4 192 L1689.4 186" stroke="#bdbdbd" stroke-width="1.8"/>
<path d="M1684.6 186 L1690.4 186 L1690.4 191.6 Z" fill="#bdbdbd"/>
<g fill="#bdbdbd">
<rect x="1700" y="183.4" width="2.6" height="2.2"/><rect x="1704.2" y="183.4" width="11.4" height="2.2" rx="0.6"/>
<rect x="1700" y="188" width="2.6" height="11" rx="0.6"/>
</g>
<g fill="none" stroke="#c0c0c0" stroke-width="1.1">
<rect x="1704.6" y="188" width="10.6" height="10.8" rx="0.8"/>
<path d="M1708.2 188 L1708.2 198.8 M1711.7 188 L1711.7 198.8 M1704.6 191.6 L1715.2 191.6 M1704.6 195.2 L1715.2 195.2"/>
</g>
</svg>
<svg style="left:0;top:0" width="1722" height="968">
<g fill="#444"><rect x="80" y="16" width="11" height="1.8"/><rect x="80" y="20.6" width="11" height="1.8"/><rect x="80" y="25.2" width="11" height="1.8"/></g>
</svg>
<div class="t" style="left:117.00px;top:14.36px;font-size:18px;color:#858585;letter-spacing:-0.1px;">Live Reporting</div>
<svg style="left:0;top:0" width="1722" height="968"><path d="M246 19 L252.2 23 L246 27" stroke="#3d8fe0" stroke-width="1.5" fill="none"/></svg>
<div class="t" style="left:267.00px;top:14.36px;font-size:18px;color:#858585;letter-spacing:-0.12px;">R530 - Compensation &amp; Headcount Variance</div>
<svg style="left:0;top:0" width="1722" height="968">
<path d="M1254 12.8 Q1255.2 12.8 1255.2 14.5 Q1258.6 15.6 1258.6 20.5 L1258.6 24.6 L1260.6 27.5 L1247.2 27.5 L1249.3 24.6 L1249.3 20.5 Q1249.3 15.6 1252.8 14.5 Q1252.8 12.8 1254 12.8 Z" fill="#111"/>
<circle cx="1253.9" cy="28.6" r="1.4" fill="#111"/>
<path d="M1350.8 22.6 L1354.8 26.2 L1358.8 22.6" stroke="#b0b0b0" stroke-width="1.3" fill="none"/>
<circle cx="1391.8" cy="21.2" r="7.6" stroke="#111" stroke-width="1.6" fill="none"/>
<circle cx="1389.2" cy="19" r="1.1" fill="#111"/><circle cx="1394.4" cy="19" r="1.1" fill="#111"/>
<path d="M1387.8 22.8 Q1391.8 27 1395.8 22.8" stroke="#111" stroke-width="1.5" fill="none"/>
<circle cx="1496.2" cy="21.2" r="7.7" stroke="#111" stroke-width="1.6" fill="none"/>
<path d="M1493.4 19.2 Q1493.4 16.2 1496.3 16.2 Q1499.2 16.2 1499.2 18.8 Q1499.2 20.6 1496.3 21.8 L1496.3 23.4" stroke="#111" stroke-width="1.8" fill="none"/>
<circle cx="1496.3" cy="25.8" r="1.1" fill="#111"/>
<rect x="1560.5" y="12.5" width="1" height="20.5" fill="#dedede"/>
<circle cx="1592.8" cy="18.2" r="4.2" fill="#111"/>
<path d="M1586.5 30.3 Q1586.3 23.4 1592.8 23.2 Q1599.3 23.4 1599.1 30.3 Z" fill="#111"/>
</svg>
<div class="t" style="left:1268.00px;top:15.65px;font-size:14px;color:#8a8a8a;">Notifications</div>
<div class="t" style="left:1406.40px;top:16.24px;font-size:13.3px;color:#8a8a8a;">Feedback</div>
<div class="t" style="left:1511.10px;top:15.99px;font-size:13.6px;color:#8a8a8a;">Help</div>
<div class="t" style="left:1602.50px;top:8.08px;font-size:15.5px;color:#6a6a6a;letter-spacing:0.35px;">Nils Rasmussen</div>
<div class="t" style="left:1602.90px;top:28.07px;font-size:10.2px;color:#b5b5b5;">C<span style="font-size:7.6px">ORP</span>D<span style="font-size:7.6px">EMO</span> M<span style="font-size:7.6px">ASTER</span></div>
<svg style="left:0;top:0" width="1722" height="968">
<path d="M140 67.6 Q140 67.1 140.6 67.1 L150.1 67.1 Q150.7 67.1 150.7 67.6 L150.7 75.2 L155.3 75.2 Q155.9 75.2 155.9 75.8 L155.9 82.6 Q155.9 83 155.4 83 L140.5 83 Q140 83 140 82.5 Z" fill="#2b2b2b"/>
<g fill="#fff" opacity="0.5"><rect x="141" y="69.3" width="8.6" height="0.8"/><rect x="141" y="71.1" width="8.6" height="0.8"/><rect x="141" y="72.9" width="8.6" height="0.8"/><rect x="141" y="74.7" width="4.4" height="0.8"/><rect x="141" y="76.5" width="4.4" height="0.8"/><rect x="141" y="78.3" width="4.4" height="0.8"/><rect x="147" y="77.3" width="8" height="0.8"/></g>
<rect x="149.4" y="80" width="2.6" height="2.6" fill="#3d8fe0"/>
</svg>
<div class="t" style="left:164.20px;top:68.80px;font-size:13.7px;color:#333;-webkit-text-stroke:0.45px #333;">Data Warehouse</div>
<svg style="left:0;top:0" width="1722" height="968">
<path d="M277.8 74 L281.5 77.7 L285.2 74" stroke="#111" stroke-width="1.9" fill="none"/>
</svg>
<svg style="left:0;top:0" width="1722" height="968">
<g fill="#111">
<!-- pencil -->
<path d="M1204.6 57.2 L1208 60.6 L1197 71.6 L1192.2 72.6 L1193.2 67.8 Z" fill="#111"/>
<path d="M1203 60.2 L1195.6 67.6" stroke="#fff" stroke-width="0.9" opacity="0.8"/>
<path d="M1192.6 71.2 L1193.3 68.4 L1196.2 71.3 Z" fill="#bbb"/>
<!-- trash -->
<rect x="1240.3" y="58.6" width="12.4" height="2.4" rx="1" fill="#111"/>
<rect x="1244.8" y="57.4" width="3.4" height="1.6" rx="0.8" fill="#333"/>
<path d="M1241 61.8 L1252 61.8 L1252 71.8 Q1252 73.5 1250.3 73.5 L1242.7 73.5 Q1241 73.5 1241 71.8 Z" fill="#222"/>
<g fill="#bdbdbd"><rect x="1243" y="63" width="1.2" height="9.2"/><rect x="1245.9" y="63" width="1.2" height="9.2"/><rect x="1248.8" y="63" width="1.2" height="9.2"/></g>
<!-- excel -->
<rect x="1322.2" y="57.2" width="13.6" height="15.6" rx="0.8" fill="none" stroke="#333" stroke-width="1.5"/>
<rect x="1324.4" y="59.3" width="9.2" height="1.6" rx="0.8" fill="#111"/>
<path d="M1325.4 64.3 L1329.8 69.1 M1329.8 64.3 L1325.4 69.1" stroke="#111" stroke-width="1.7"/>
<circle cx="1332.3" cy="67.2" r="1.4" fill="#555"/>
<path d="M1325 99 L1328.8 102.8 L1332.6 99" stroke="#111" stroke-width="1.9" fill="none"/>
<!-- comment -->
<path d="M1417.4 69.4 Q1410.8 68.4 1410.8 63.2 Q1410.8 57 1418.8 57 Q1426.8 57 1426.8 63.2 Q1426.8 67.4 1422.6 69 L1419.8 72.4 Z" fill="none" stroke="#111" stroke-width="1.4" stroke-linejoin="round"/>
<g fill="#333"><rect x="1415.2" y="60.2" width="7" height="1.1"/><rect x="1415.2" y="62.1" width="7" height="1.1"/><rect x="1415.2" y="64" width="7" height="1.1"/><rect x="1415.2" y="65.8" width="7" height="1.1"/></g>
<!-- share -->
<path d="M1484.5 60 L1473.5 65 L1484.5 69.8" stroke="#111" stroke-width="1.5" fill="none"/>
<circle cx="1484.8" cy="59.8" r="2.3" fill="#111"/><circle cx="1473.2" cy="65" r="2.3" fill="#111"/><circle cx="1484.8" cy="70" r="2.3" fill="#111"/>
<!-- archive binders -->
<g fill="#111">
<rect x="1551.2" y="58.8" width="5.3" height="14.2"/><rect x="1557" y="58.8" width="5.3" height="14.2"/>
<path d="M1562.6 59 L1567.4 58.2 L1569.4 72 L1564.6 72.8 Z"/>
</g>
<g fill="#fff"><rect x="1552.5" y="60.2" width="2.8" height="3.8"/><rect x="1558.3" y="60.2" width="2.8" height="3.8"/><circle cx="1553.9" cy="69.8" r="1.2"/><circle cx="1559.7" cy="69.8" r="1.2"/><path d="M1564 60.2 L1566.6 59.8 L1567.1 63.6 L1564.5 64 Z"/><circle cx="1566.6" cy="69.4" r="1.2"/></g>
<!-- history -->
<path d="M1638.5 62.6 A7.2 7.2 0 1 1 1639.1 68.4" stroke="#111" stroke-width="1.9" fill="none"/>
<path d="M1635 62 L1641.8 62 L1638.3 66.6 Z" fill="#111"/>
<path d="M1643.8 60.4 L1645.3 64.8 L1649.2 66.6" stroke="#111" stroke-width="1.5" fill="none"/>
<!-- close -->
<path d="M1695 59.8 L1704.8 69.8 M1704.8 59.8 L1695 69.8" stroke="#111" stroke-width="4.4" stroke-linecap="square"/>
</svg>
<div class="t" style="left:1100.40px;width:200px;text-align:center;top:85.73px;font-size:10.6px;color:#666;-webkit-text-stroke:0.25px #666;">EDIT</div>
<div class="t" style="left:1146.40px;width:200px;text-align:center;top:85.73px;font-size:10.6px;color:#666;-webkit-text-stroke:0.25px #666;">DELETE</div>
<div class="t" style="left:1228.20px;width:200px;text-align:center;top:85.73px;font-size:10.6px;color:#666;-webkit-text-stroke:0.25px #666;">EXPORT TO EXCEL</div>
<div class="t" style="left:1318.80px;width:200px;text-align:center;top:85.73px;font-size:10.6px;color:#666;-webkit-text-stroke:0.25px #666;">COMMENT</div>
<div class="t" style="left:1379.40px;width:200px;text-align:center;top:85.73px;font-size:10.6px;color:#666;-webkit-text-stroke:0.25px #666;">SHARE</div>
<div class="t" style="left:1459.80px;width:200px;text-align:center;top:85.73px;font-size:10.6px;color:#666;-webkit-text-stroke:0.25px #666;">SEND TO ARCHIVE</div>
<div class="t" style="left:1545.10px;width:200px;text-align:center;top:85.73px;font-size:10.6px;color:#666;-webkit-text-stroke:0.25px #666;">HISTORY</div>
<div class="t" style="left:1599.50px;width:200px;text-align:center;top:85.73px;font-size:10.6px;color:#666;-webkit-text-stroke:0.25px #666;">CLOSE</div>
<svg style="left:0;top:0" width="1722" height="968">
<path d="M84 78 L87.2 81.2 L84 84.4 M88.4 78 L91.6 81.2 L88.4 84.4" stroke="#555" stroke-width="1.2" fill="none"/>
<path d="M77.8 233.5 Q77.8 231 86.3 231 Q94.8 231 94.8 233.5 L89 240.5 L89 247 L83.6 247 L83.6 240.5 Z" fill="#444"/>
<ellipse cx="86.3" cy="233.2" rx="6.4" ry="1.3" fill="#bdbdbd"/>
</svg>
<div class="t" style="left:95.2px;top:213.4px;font-size:22.2px;color:#666;transform-origin:0 0;transform:rotate(-90deg) translate(0,-19.8px);">Parameters</div>
<svg style="left:0;top:0" width="1722" height="968">
<!-- logo -->
<path d="M16.5 32.5 L40.7 21.5 L34.6 34.6 Q27 31.6 16.5 32.5 Z" fill="#1f73c8"/>
<path d="M41.3 21.8 L53.4 35.6 Q43.8 33.4 35.2 35 Z" fill="#9acd32"/>
<!-- home -->
<path d="M22.3 89.2 L34.3 77.2 L46.7 89.2" stroke="#3d8fe0" stroke-width="3" fill="none"/>
<path d="M34.3 81 L44.3 88.8 L44.3 101.4 L24.5 101.4 L24.5 88.8 Z" fill="#fff"/>
<rect x="26.8" y="91.3" width="5.2" height="3.7" fill="#323a45"/>
<rect x="35" y="91.3" width="5" height="10.2" fill="#323a45"/>
<!-- binders -->
<rect x="20.8" y="136" width="7.3" height="24.2" fill="#fff"/>
<rect x="28.6" y="136" width="7.6" height="24.2" fill="#fff"/>
<path d="M36.8 136.4 L43.2 135 L49 159 L42.4 160.4 Z" fill="#fff"/>
<rect x="22.4" y="137.6" width="4.2" height="10.2" fill="#2a313a"/><rect x="22.4" y="137.6" width="4.2" height="2.4" fill="#3d8fe0"/>
<rect x="30.2" y="137.6" width="4.4" height="10.2" fill="#2a313a"/><rect x="30.2" y="137.6" width="4.4" height="2.4" fill="#3d8fe0"/>
<path d="M38.2 137.8 L42.4 137 L44.8 146.8 L40.6 147.6 Z" fill="#2a313a"/><path d="M38.2 137.8 L42.4 137 L42.9 139.3 L38.7 140.1 Z" fill="#3d8fe0"/>
<circle cx="24.5" cy="155" r="1.8" fill="#2a313a"/><circle cx="32.4" cy="155" r="1.8" fill="#2a313a"/><circle cx="44.2" cy="154.6" r="1.8" fill="#2a313a"/>
<!-- clipboard -->
<rect x="25.9" y="196.4" width="17.2" height="21.2" rx="1.5" fill="none" stroke="#fff" stroke-width="2.4"/>
<path d="M27.8 198.8 L27.8 196.6 Q27.8 193.6 31 193.4 Q32 190 34.6 190 Q37.2 190 38.2 193.4 Q41.4 193.6 41.4 196.6 L41.4 198.8 Z" fill="#fff"/>
<circle cx="34.6" cy="192.3" r="0.9" fill="#323a45"/>
<rect x="30.6" y="195" width="8" height="2" rx="1" fill="#8a9099"/>
<path d="M30.6 203.6 L33.2 206.2 L38.6 200.6 M30.6 211.2 L33.2 213.8 L38.6 208.2" stroke="#3d8fe0" stroke-width="2.2" fill="none"/>
<!-- report (active) -->
<rect x="23.8" y="250.5" width="21.6" height="26.6" fill="none" stroke="#fff" stroke-width="2"/>
<rect x="26.4" y="254.2" width="15.9" height="3.6" fill="#fff"/>
<path d="M29.5 261.5 L40 266.8 L29.5 272 Z" fill="#3d8fe0"/>
<!-- calculator -->
<rect x="24.7" y="308.9" width="19.6" height="27.9" rx="1.8" fill="#fff"/>
<rect x="27.3" y="311.8" width="14.3" height="4.9" rx="1" fill="#3d8fe0"/>
<g fill="#1e242c">
<circle cx="29.4" cy="321.6" r="1.6"/><circle cx="34.4" cy="321.6" r="1.6"/><circle cx="39.3" cy="321.6" r="1.6"/>
<circle cx="29.4" cy="326.5" r="1.6"/><circle cx="34.4" cy="326.5" r="1.6"/><circle cx="39.3" cy="326.5" r="1.6"/>
<circle cx="29.4" cy="331.3" r="1.6"/><circle cx="34.4" cy="331.3" r="1.6"/><circle cx="39.3" cy="331.3" r="1.6"/>
</g>
<!-- doc/person -->
<circle cx="34.6" cy="381.2" r="10.9" fill="none" stroke="#3d8fe0" stroke-width="1.8"/>
<path d="M21.3 374.9 L28.6 374.9 L31.2 377.6 L31.2 387.4 L21.3 387.4 Z" fill="#1e242c" stroke="#323a45" stroke-width="4.2" stroke-linejoin="round"/>
<path d="M21.3 374.9 L28.6 374.9 L31.2 377.6 L31.2 387.4 L21.3 387.4 Z" fill="#1e242c" stroke="#fff" stroke-width="1.5"/>
<path d="M25 376 L25 381 L30 381" fill="none" stroke="#fff" stroke-width="0.7" opacity="0.35"/>
<path d="M28.2 375.2 L28.2 378 L31 378" fill="none" stroke="#fff" stroke-width="1.1"/>
<circle cx="43.2" cy="378.1" r="4" fill="#fff" stroke="#323a45" stroke-width="2.2"/>
<path d="M38 388.3 Q37.7 382.6 43.2 382.4 Q48.7 382.6 48.4 388.3 Z" fill="#fff" stroke="#323a45" stroke-width="2.2"/>
<circle cx="43.2" cy="378.1" r="4" fill="#fff"/>
<path d="M38 388.3 Q37.7 382.6 43.2 382.4 Q48.7 382.6 48.4 388.3 Z" fill="#fff"/>
<!-- hierarchy -->
<g fill="none" stroke="#fff" stroke-width="2.1">
<rect x="30" y="427.2" width="9.2" height="7.2" rx="1.6"/>
<rect x="30" y="437.2" width="9.2" height="7.2" rx="1.6"/>
<rect x="30" y="447" width="9.2" height="7.2" rx="1.6"/>
</g>
<g fill="#1e242c"><rect x="32.3" y="429.6" width="4.6" height="2.4"/><rect x="32.3" y="439.6" width="4.6" height="2.4"/><rect x="32.3" y="449.4" width="4.6" height="2.4"/></g>
<path d="M28 433.6 Q23.6 434 23.8 436.2 Q24 438.4 27.6 438.6" stroke="#3d8fe0" stroke-width="1.7" fill="none"/>
<path d="M41.2 443.4 Q45.6 443.6 45.4 445.8 Q45.2 448 41.6 448.2" stroke="#3d8fe0" stroke-width="1.7" fill="none"/>
<!-- tools -->
<path d="M42.6 493.6 L33.4 502.2" stroke="#fff" stroke-width="3.2"/>
<path d="M31.6 504 L25 509" stroke="#3d8fe0" stroke-width="4.6" stroke-linecap="round"/>
<path d="M39.2 485.4 L50.4 496.8 L46.1 501 L35 489.6 Z" fill="#fff"/>
<path d="M36.2 490.8 L39.6 494.4" stroke="#323a45" stroke-width="1.1"/>
<path d="M31 498.6 L43.2 509.4" stroke="#323a45" stroke-width="7.2" stroke-linecap="round"/>
<circle cx="26.6" cy="492.4" r="7.6" fill="#323a45"/>
<path d="M30.6 498.6 L42.8 509" stroke="#fff" stroke-width="5" stroke-linecap="round"/>
<circle cx="27" cy="492.6" r="6.4" fill="#fff"/>
<path d="M15.8 485.6 L19.6 481.8 L28.6 490.8 Q28.2 493.6 24.8 494.6 Z" fill="#323a45"/>
<circle cx="41.6" cy="507.6" r="1.3" fill="#323a45"/>
<!-- gear -->
<path fill="#fff" stroke="#fff" stroke-width="1.4" stroke-linejoin="round" d="M36.94 568.38 L36.51 571.02 L32.09 571.02 L31.66 568.38 L29.52 567.60 L27.50 569.35 L24.11 566.50 L25.48 564.21 L24.34 562.23 L21.67 562.27 L20.90 557.92 L23.43 557.04 L23.82 554.80 L21.75 553.11 L23.96 549.28 L26.46 550.23 L28.20 548.76 L27.70 546.14 L31.86 544.62 L33.16 546.96 L35.44 546.96 L36.74 544.62 L40.90 546.14 L40.40 548.76 L42.14 550.23 L44.64 549.28 L46.85 553.11 L44.78 554.80 L45.17 557.04 L47.70 557.92 L46.93 562.27 L44.26 562.23 L43.12 564.21 L44.49 566.50 L41.10 569.35 L39.08 567.60 Z"/>
<circle cx="34.3" cy="557.8" r="5.6" fill="#323a45"/>
</svg>
</div>
</body></html>
